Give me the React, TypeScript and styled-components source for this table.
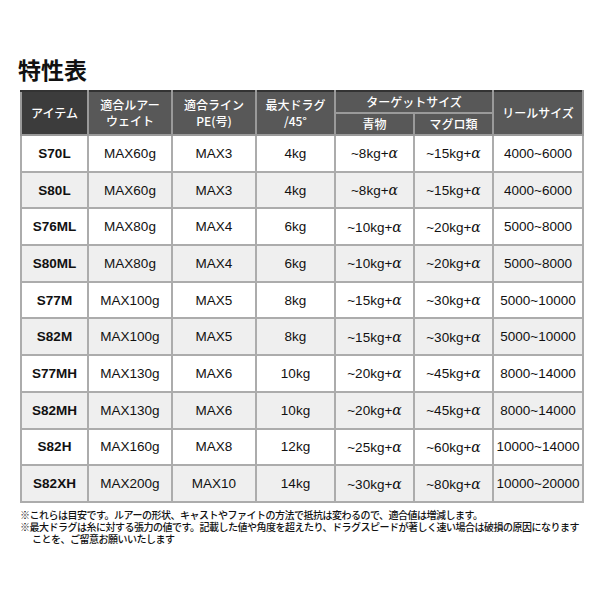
import styled, { createGlobalStyle } from "styled-components";

const GlobalStyle = createGlobalStyle`
  body {
    margin: 0;
    background: #ffffff;
    font-family: "Liberation Sans", "Noto Sans CJK JP", sans-serif;
    color: #111111;
  }
`;

type Row = {
  item: string;
  lure: string;
  line: string;
  drag: string;
  blue: string;
  tuna: string;
  reel: string;
};

const rows: Row[] = [
  { item: "S70L", lure: "MAX60g", line: "MAX3", drag: "4kg", blue: "~8kg+", tuna: "~15kg+", reel: "4000~6000" },
  { item: "S80L", lure: "MAX60g", line: "MAX3", drag: "4kg", blue: "~8kg+", tuna: "~15kg+", reel: "4000~6000" },
  { item: "S76ML", lure: "MAX80g", line: "MAX4", drag: "6kg", blue: "~10kg+", tuna: "~20kg+", reel: "5000~8000" },
  { item: "S80ML", lure: "MAX80g", line: "MAX4", drag: "6kg", blue: "~10kg+", tuna: "~20kg+", reel: "5000~8000" },
  { item: "S77M", lure: "MAX100g", line: "MAX5", drag: "8kg", blue: "~15kg+", tuna: "~30kg+", reel: "5000~10000" },
  { item: "S82M", lure: "MAX100g", line: "MAX5", drag: "8kg", blue: "~15kg+", tuna: "~30kg+", reel: "5000~10000" },
  { item: "S77MH", lure: "MAX130g", line: "MAX6", drag: "10kg", blue: "~20kg+", tuna: "~45kg+", reel: "8000~14000" },
  { item: "S82MH", lure: "MAX130g", line: "MAX6", drag: "10kg", blue: "~20kg+", tuna: "~45kg+", reel: "8000~14000" },
  { item: "S82H", lure: "MAX160g", line: "MAX8", drag: "12kg", blue: "~25kg+", tuna: "~60kg+", reel: "10000~14000" },
  { item: "S82XH", lure: "MAX200g", line: "MAX10", drag: "14kg", blue: "~30kg+", tuna: "~80kg+", reel: "10000~20000" },
];

const colWidths = [67, 84, 84, 79, 79, 79, 90];

export default function App() {
  return (
    <Page>
      <GlobalStyle />
      <Title>特性表</Title>
      <SpecTable>
        <colgroup>
          {colWidths.map((w, i) => (
            <col key={i} style={{ width: w }} />
          ))}
        </colgroup>
        <thead>
          <tr>
            <HeadCell rowSpan={2} $dark>
              アイテム
            </HeadCell>
            <HeadCell rowSpan={2}>
              適合ルアー
              <br />
              ウェイト
            </HeadCell>
            <HeadCell rowSpan={2}>
              適合ライン
              <br />
              PE(号)
            </HeadCell>
            <HeadCell rowSpan={2}>
              最大ドラグ
              <br />
              /45°
            </HeadCell>
            <HeadCell colSpan={2}>ターゲットサイズ</HeadCell>
            <HeadCell rowSpan={2}>リールサイズ</HeadCell>
          </tr>
          <tr>
            <HeadCell>青物</HeadCell>
            <HeadCell>マグロ類</HeadCell>
          </tr>
        </thead>
        <tbody>
          {rows.map((r, i) => (
            <BodyRow key={r.item} $shaded={i % 2 === 1}>
              <Cell $bold>{r.item}</Cell>
              <Cell>{r.lure}</Cell>
              <Cell>{r.line}</Cell>
              <Cell>{r.drag}</Cell>
              <Cell>
                {r.blue}
                <Alpha>α</Alpha>
              </Cell>
              <Cell>
                {r.tuna}
                <Alpha>α</Alpha>
              </Cell>
              <Cell>{r.reel}</Cell>
            </BodyRow>
          ))}
        </tbody>
      </SpecTable>
      <Notes>
        <Note>※これらは目安です。ルアーの形状、キャストやファイトの方法で抵抗は変わるので、適合値は増減します。</Note>
        <Note>
          ※最大ドラグは糸に対する張力の値です。記載した値や角度を超えたり、ドラグスピードが著しく速い場合は破損の原因になります
          <br />
          ことを、ご留意お願いいたします
        </Note>
      </Notes>
    </Page>
  );
}

const Page = styled.div`
  width: 600px;
  height: 600px;
  box-sizing: border-box;
  padding: 55px 18px 0 20px;
`;

const Title = styled.h1`
  margin: 0 0 6px -2px;
  font-family: "Noto Sans CJK JP", sans-serif;
  font-size: 23px;
  line-height: 29px;
  font-weight: 700;
  color: #111111;
`;

const SpecTable = styled.table`
  width: 562px;
  table-layout: fixed;
  border-collapse: collapse;
  border: 2px solid #333333;
`;

const HeadCell = styled.th<{ $dark?: boolean }>`
  height: 20px;
  padding: 0;
  background: ${(p) => (p.$dark ? "#3c3c3c" : "#585858")};
  color: #ffffff;
  border: 2px solid #9a9a9a;
  border-top-color: #333333;
  font-family: "Noto Sans CJK JP", sans-serif;
  font-size: 12px;
  font-weight: 500;
  line-height: 16px;
  text-align: center;
  vertical-align: middle;
`;

const BodyRow = styled.tr<{ $shaded: boolean }>`
  background: ${(p) => (p.$shaded ? "#efefef" : "#ffffff")};
`;

const Cell = styled.td<{ $bold?: boolean }>`
  height: 34.7px;
  padding: 0;
  border: 2px solid #acacac;
  font-size: 13.5px;
  font-weight: ${(p) => (p.$bold ? 700 : 400)};
  text-align: center;
  vertical-align: middle;
  color: #111111;
  white-space: nowrap;
`;

const Alpha = styled.span`
  font-family: "DejaVu Serif", serif;
  font-style: italic;
  font-size: 14px;
`;

const Notes = styled.div`
  margin-top: 6px;
  font-family: "Noto Sans CJK JP", sans-serif;
  font-size: 10px;
  font-weight: 500;
  line-height: 12px;
  color: #111111;
  letter-spacing: -0.5px;
`;

const Note = styled.p`
  margin: 0;
  padding-left: 12px;
  text-indent: -12px;
  white-space: nowrap;
`;
